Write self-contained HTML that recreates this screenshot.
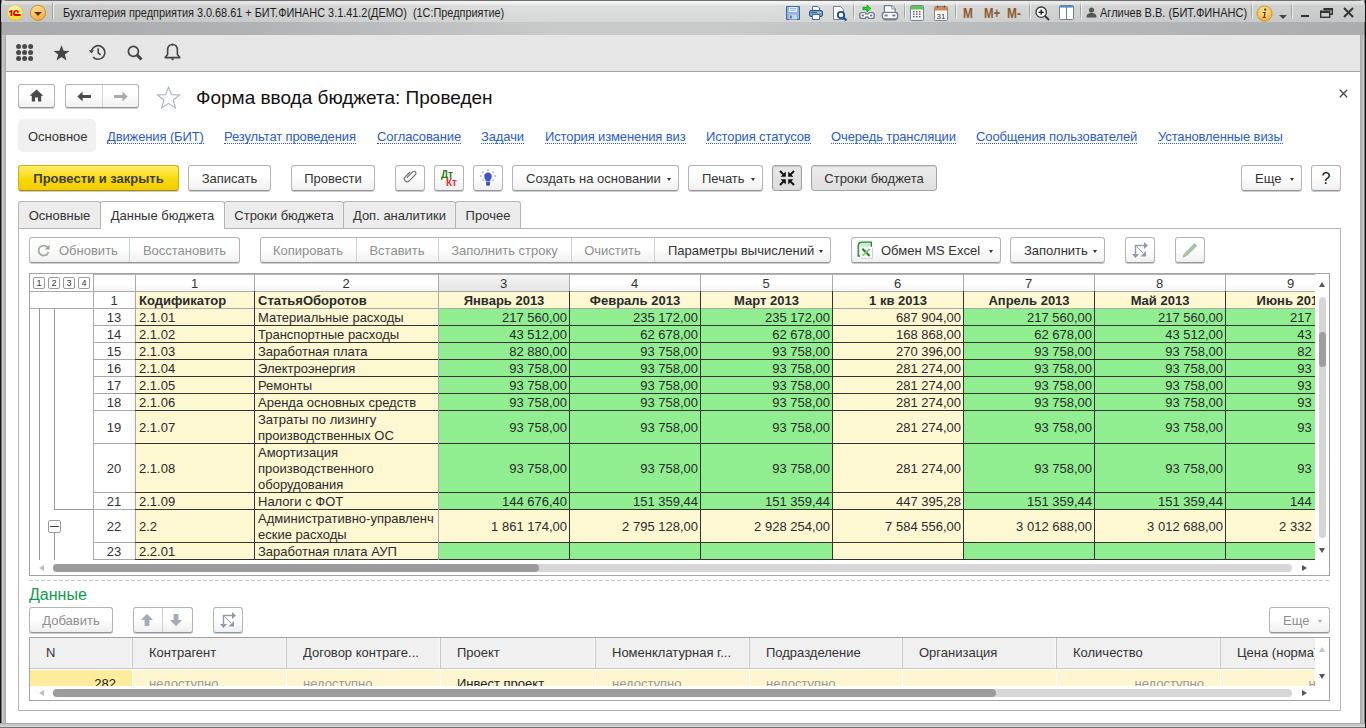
<!DOCTYPE html>
<html><head><meta charset="utf-8"><title>1C</title>
<style>
*{margin:0;padding:0;box-sizing:border-box}
html,body{width:1366px;height:728px;overflow:hidden;position:relative;background:#fff;font-family:"Liberation Sans",sans-serif;font-size:13px;color:#333}
.abs{position:absolute}
.t{position:absolute;white-space:nowrap}
.btn{position:absolute;height:26px;border:1px solid #b4b4b4;border-bottom-color:#979797;border-radius:3px;background:linear-gradient(#ffffff 0%,#ffffff 45%,#efefef 100%);box-shadow:0 1px 0 rgba(0,0,0,.2);color:#333;font-size:13px;line-height:24px;padding-top:1px;text-align:center;white-space:nowrap}
.dis{color:#8e8e8e}
.arr{position:absolute;width:0;height:0;border-left:2.5px solid transparent;border-right:2.5px solid transparent;border-top:3px solid #333}
.lnk{position:absolute;color:#2a5ac8;white-space:nowrap;font-size:13px;line-height:13px;height:14px;border-bottom:1px dotted #2a5ac8}
.tab{position:absolute;top:201px;height:27px;border:1px solid #b5b5b5;border-bottom:none;border-radius:3px 3px 0 0;background:#ececec;line-height:27px;text-align:center;font-size:13px;color:#333}
.cell{position:absolute;overflow:hidden;white-space:nowrap;line-height:16px;padding-top:1px}
</style></head><body>

<div class="abs" style="left:0;top:0;width:1366px;height:728px;background:linear-gradient(90deg,#111 0,#111 1px,#747474 1px,#747474 2px,#cbcbcb 2px,#cbcbcb 3px,#bdbdbd 3px,#bdbdbd 5px,#a9a9a9 5px,#a9a9a9 1361px,#b9b9b9 1361px,#b9b9b9 1363px,#cacaca 1363px,#cacaca 1364px,#777 1364px,#777 1365px,#111 1365px)"></div>
<div class="abs" style="left:0;top:723px;width:1365px;height:5px;background:linear-gradient(#a9a9a9 0,#a9a9a9 1px,#c5c6c6 1px,#cacbcb 3px,#d6d6d6 3px,#d6d6d6 4px,#747474 4px)"></div>
<div class="abs" style="left:1px;top:0;width:1364px;height:22px;border-radius:6px 6px 0 0;background:linear-gradient(#707070 0,#707070 1px,#f6f6f6 1px,#f0f0f0 4px,#dedfdf 5.5px,#d6d7d7 22px)"></div>
<div class="abs" style="left:1px;top:1px;width:1364px;height:21px;border-radius:6px 6px 0 0;background:linear-gradient(90deg,rgba(0,0,0,.09) 0,rgba(0,0,0,.06) 250px,rgba(0,0,0,0) 520px,rgba(0,0,0,0) 760px,rgba(0,0,0,.04) 1000px,rgba(0,0,0,.08) 1364px)"></div>
<div class="abs" style="left:2px;top:22px;width:1362px;height:13px;background:linear-gradient(90deg,#a8aaac 0,#b0b2b4 250px,#c9caca 560px,#c9caca 720px,#b8babb 1000px,#aaacae 1362px)"></div>
<div class="abs" style="left:6px;top:35px;width:1354px;height:36px;background:#e6e6e6"></div>
<div class="abs" style="left:6px;top:71px;width:1354px;height:1px;background:#a6a6a6"></div>
<div class="abs" style="left:6px;top:72px;width:1354px;height:651px;background:#fff"></div>
<svg class="abs" style="left:6px;top:4px" width="18" height="18" viewBox="0 0 18 18">
<defs><linearGradient id="yg" x1="0" y1="0" x2="0" y2="1"><stop offset="0" stop-color="#fff6b8"/><stop offset=".55" stop-color="#ffee60"/><stop offset="1" stop-color="#ffd800"/></linearGradient>
<linearGradient id="og" x1="0" y1="0" x2=".3" y2="1"><stop offset="0" stop-color="#ffe0a0"/><stop offset="1" stop-color="#ffae3c"/></linearGradient></defs>
<circle cx="9" cy="8.7" r="7.6" fill="url(#yg)" stroke="#dcc24c" stroke-width=".7"/>
<path d="M3 7.4 L5.4 6 L6.3 6 L6.3 11.9 L4.6 11.9 L4.6 8.2 L3.3 8.8Z" fill="#e40000"/>
<path d="M7.1 9.6 C7.1 7.3 8.5 6 10.1 6 C11.8 6 12.9 7.1 12.9 8.7 L11.2 8.7 C11.2 7.9 10.8 7.5 10.1 7.5 C9.3 7.5 8.8 8.3 8.8 9.6 C8.8 9.9 8.8 10 8.9 10.1 L14.6 10.1 L14.6 11.9 L9.3 11.9 C7.9 11.9 7.1 11 7.1 9.6Z" fill="#e40000"/>
</svg>
<svg class="abs" style="left:29px;top:4px" width="18" height="18" viewBox="0 0 18 18">
<circle cx="9" cy="8.8" r="7.6" fill="url(#og)" stroke="#bf942c" stroke-width="1"/>
<path d="M5.2 8 L12.8 8 L9 11.9Z" fill="#4a3a22"/>
</svg>
<div class="abs" style="left:52px;top:3px;width:1px;height:16px;background:#9d9d9d;box-shadow:1px 0 0 #f4f4f4"></div>
<div class="t" style="left:63px;top:6px;font-size:12px;line-height:15px;color:#1e1e1e;transform:scaleX(0.907);transform-origin:0 0">Бухгалтерия предприятия 3.0.68.61 + БИТ.ФИНАНС 3.1.41.2(ДЕМО)&nbsp; (1С:Предприятие)</div>
<svg class="abs" style="left:786px;top:6px" width="14" height="14" viewBox="0 0 14 14">
<path d="M0.5 0.5 H13.5 V13.5 H0.5Z" fill="#8cb4e4" stroke="#3a68a6"/>
<rect x="3" y="1" width="8" height="5" fill="#e8f0fa"/><rect x="4" y="2.2" width="6" height=".8" fill="#8aa8cc"/><rect x="4" y="3.8" width="6" height=".8" fill="#8aa8cc"/>
<rect x="3" y="8.5" width="8" height="5" fill="#c9d3dc"/><rect x="4" y="9.5" width="1.6" height="3" fill="#3a6aa8"/>
</svg>
<svg class="abs" style="left:809px;top:6px" width="14" height="14" viewBox="0 0 14 14">
<path d="M3.5 0.5 H9 L10.5 2 V5 H3.5Z" fill="#fff" stroke="#4a6f9c"/>
<rect x="0.5" y="4.5" width="13" height="6" rx="1.5" fill="#7aa2d0" stroke="#2f5586"/><rect x="2" y="6" width="10" height=".8" fill="#2f5586"/>
<rect x="10.5" y="6" width="1.5" height="1" fill="#fff"/><rect x="8.5" y="6" width="1.2" height="1" fill="#fff"/>
<rect x="3.5" y="8.5" width="7" height="5" fill="#fff" stroke="#4a6f9c"/>
</svg>
<svg class="abs" style="left:833px;top:6px" width="15" height="15" viewBox="0 0 15 15">
<path d="M0.5 0.5 H7.5 L10.5 3.5 V13.5 H0.5Z" fill="#fff" stroke="#6d7f95"/>
<circle cx="8" cy="9" r="3.2" fill="#fff" stroke="#1d4f86" stroke-width="1.8"/>
<path d="M10.2 11.2 L13.5 14.5" stroke="#1d4f86" stroke-width="2.2"/>
</svg>
<div class="abs" style="left:853px;top:3px;width:1px;height:16px;background:linear-gradient(rgba(160,160,160,.3),#a0a0a0 30%,#a0a0a0 70%,rgba(160,160,160,.3));box-shadow:1px 0 0 rgba(255,255,255,.6)"></div>
<svg class="abs" style="left:858px;top:4px" width="18" height="16" viewBox="0 0 18 16">
<path d="M5 3.3 H9 V1.1 L12.9 4.5 L9 7.9 V5.7 H5Z" fill="#24e024" stroke="#129012" stroke-width=".8" stroke-linejoin="round"/>
<rect x="1.8" y="8.6" width="6.4" height="5.8" rx="2" fill="#fff" stroke="#6e7c8c" stroke-width="1.4"/>
<rect x="9.8" y="8.6" width="6.4" height="5.8" rx="2" fill="#fff" stroke="#6e7c8c" stroke-width="1.4"/>
<rect x="3.6" y="10.6" width="2.6" height="1.8" fill="#6e7c8c"/><rect x="11.8" y="10.6" width="2.6" height="1.8" fill="#6e7c8c"/>
<rect x="6.2" y="10.8" width="5.6" height="1.4" fill="#fff"/>
</svg>
<svg class="abs" style="left:881px;top:4px" width="18" height="17" viewBox="0 0 18 17">
<path d="M3.4 8.5 V1.6 H10.8 L14.2 5 V8.5" fill="#fff" stroke="#6e7c8c" stroke-width="1.2"/>
<path d="M10.8 1.6 V5 H14.2" fill="#e8ecf0" stroke="#6e7c8c" stroke-width=".8"/>
<rect x="1.4" y="8.4" width="15.2" height="6.6" rx="2.2" fill="#f6f7f8" stroke="#6e7c8c" stroke-width="1.4"/>
<rect x="2.5" y="15" width="13" height="1.4" fill="#6e7c8c"/>
<rect x="3.6" y="10.6" width="3" height="1.8" fill="#6e7c8c"/><rect x="11.4" y="10.6" width="3" height="1.8" fill="#6e7c8c"/>
</svg>
<div class="abs" style="left:904px;top:3px;width:1px;height:16px;background:linear-gradient(rgba(160,160,160,.3),#a0a0a0 30%,#a0a0a0 70%,rgba(160,160,160,.3));box-shadow:1px 0 0 rgba(255,255,255,.6)"></div>
<svg class="abs" style="left:910px;top:5px" width="14" height="16" viewBox="0 0 14 16">
<rect x="0.5" y="0.5" width="13" height="15" rx="1" fill="#f2f4f6" stroke="#7a8592"/>
<rect x="1" y="1" width="12" height="3.5" fill="#5ac85a"/>
<g fill="#555"><rect x="3" y="6" width="1.5" height="1.3"/><rect x="6" y="6" width="1.5" height="1.3"/><rect x="3" y="8.5" width="1.5" height="1.3"/><rect x="6" y="8.5" width="1.5" height="1.3"/><rect x="3" y="11" width="1.5" height="1.3"/><rect x="6" y="11" width="1.5" height="1.3"/><rect x="9" y="8.5" width="1.5" height="1.3"/><rect x="9" y="11" width="1.5" height="1.3"/></g>
<rect x="9" y="6" width="1.5" height="1.3" fill="#e03030"/>
</svg>
<svg class="abs" style="left:934px;top:5px" width="14" height="16" viewBox="0 0 14 16">
<rect x="0.5" y="1.5" width="13" height="14" rx="1" fill="#f6f6f6" stroke="#7a8592"/>
<rect x="1" y="2" width="12" height="3.5" fill="#d48a50"/>
<rect x="3" y="0.5" width="1.2" height="2.5" fill="#8a5a30"/><rect x="9.8" y="0.5" width="1.2" height="2.5" fill="#8a5a30"/>
<text x="7" y="13.6" font-family="Liberation Sans" font-size="8" text-anchor="middle" fill="#333">31</text>
</svg>
<div class="abs" style="left:955px;top:3px;width:1px;height:16px;background:linear-gradient(rgba(160,160,160,.3),#a0a0a0 30%,#a0a0a0 70%,rgba(160,160,160,.3));box-shadow:1px 0 0 rgba(255,255,255,.6)"></div>
<div class="t" style="left:963px;top:5px;font-size:14px;line-height:16px;font-weight:bold;color:#8a5a2e;transform:scaleX(0.85);transform-origin:0 0">M</div>
<div class="t" style="left:984px;top:5px;font-size:14px;line-height:16px;font-weight:bold;color:#8a5a2e;transform:scaleX(0.82);transform-origin:0 0">M+</div>
<div class="t" style="left:1007px;top:5px;font-size:14px;line-height:16px;font-weight:bold;color:#8a5a2e;transform:scaleX(0.85);transform-origin:0 0">M-</div>
<div class="abs" style="left:1029px;top:3px;width:1px;height:16px;background:linear-gradient(rgba(160,160,160,.3),#a0a0a0 30%,#a0a0a0 70%,rgba(160,160,160,.3));box-shadow:1px 0 0 rgba(255,255,255,.6)"></div>
<svg class="abs" style="left:1035px;top:6px" width="15" height="15" viewBox="0 0 15 15">
<circle cx="6.2" cy="6.2" r="5.2" fill="#fff" stroke="#333" stroke-width="1.3"/>
<path d="M3.6 6.2 H8.8 M6.2 3.6 V8.8" stroke="#222" stroke-width="1.4"/>
<path d="M10 10 L14 14" stroke="#333" stroke-width="1.8"/>
</svg>
<svg class="abs" style="left:1059px;top:5px" width="15" height="15" viewBox="0 0 15 15">
<rect x="0.5" y="0.5" width="14" height="14" rx="1" fill="#fff" stroke="#6f7f90"/>
<rect x="1" y="1" width="13" height="1.6" fill="#4a90d9"/>
<rect x="7" y="2" width="1" height="12" fill="#6f7f90"/>
</svg>
<div class="abs" style="left:1080px;top:3px;width:1px;height:16px;background:linear-gradient(rgba(160,160,160,.3),#a0a0a0 30%,#a0a0a0 70%,rgba(160,160,160,.3));box-shadow:1px 0 0 rgba(255,255,255,.6)"></div>
<svg class="abs" style="left:1086px;top:7px" width="11" height="11" viewBox="0 0 11 11">
<circle cx="5.5" cy="3" r="2.6" fill="#555"/><path d="M0.5 10.5 C0.5 6.8 2.5 6 5.5 6 C8.5 6 10.5 6.8 10.5 10.5Z" fill="#555"/>
</svg>
<div class="t" style="left:1100px;top:6px;font-size:12px;line-height:15px;color:#1e1e1e;transform:scaleX(0.92);transform-origin:0 0">Агличев В.В. (БИТ.ФИНАНС)</div>
<div class="abs" style="left:1251px;top:3px;width:1px;height:16px;background:linear-gradient(rgba(160,160,160,.3),#a0a0a0 30%,#a0a0a0 70%,rgba(160,160,160,.3));box-shadow:1px 0 0 rgba(255,255,255,.6)"></div>
<svg class="abs" style="left:1256px;top:5px" width="17" height="17" viewBox="0 0 17 17">
<defs><radialGradient id="ig" cx="50%" cy="35%" r="65%"><stop offset="0" stop-color="#ffe6a6"/><stop offset="1" stop-color="#f4b034"/></radialGradient></defs>
<circle cx="8.5" cy="8.5" r="7.6" fill="url(#ig)" stroke="#c9922e" stroke-width=".9"/>
<circle cx="9.2" cy="4.6" r="1.2" fill="#5a3c10"/>
<path d="M6.8 7 H9.8 L8.8 12 H10 L9.8 13 H6.4 L6.6 12 H7.6 L8.3 8 H6.6Z" fill="#5a3c10"/>
</svg>
<div class="arr" style="left:1279px;top:15px;border-left-width:4px;border-right-width:4px;border-top:4px solid #444"></div>
<div class="abs" style="left:1291px;top:3px;width:1px;height:16px;background:linear-gradient(rgba(160,160,160,.3),#a0a0a0 30%,#a0a0a0 70%,rgba(160,160,160,.3));box-shadow:1px 0 0 rgba(255,255,255,.6)"></div>
<div class="abs" style="left:1301px;top:15px;width:8px;height:2px;background:#333"></div>
<svg class="abs" style="left:1320px;top:8px" width="13" height="10" viewBox="0 0 13 10">
<path d="M3.5 0.7 H12.3 V6.3 H10" fill="none" stroke="#333" stroke-width="1.4"/>
<rect x="0.7" y="3.2" width="9" height="6.1" fill="none" stroke="#333" stroke-width="1.4"/>
<rect x="0.7" y="3.2" width="9" height="1.8" fill="#333"/><rect x="3.5" y="0.7" width="8.8" height="1.6" fill="#333"/>
</svg>
<svg class="abs" style="left:1343px;top:7px" width="11" height="11" viewBox="0 0 11 11">
<path d="M1 1 L10 10 M10 1 L1 10" stroke="#333" stroke-width="2"/>
</svg>
<svg class="abs" style="left:16px;top:44px" width="18" height="18" viewBox="0 0 18 18"><circle cx="2.6" cy="2.6" r="2.5" fill="#4a4a4a"/><circle cx="2.6" cy="8.6" r="2.5" fill="#4a4a4a"/><circle cx="2.6" cy="14.6" r="2.5" fill="#4a4a4a"/><circle cx="8.6" cy="2.6" r="2.5" fill="#4a4a4a"/><circle cx="8.6" cy="8.6" r="2.5" fill="#4a4a4a"/><circle cx="8.6" cy="14.6" r="2.5" fill="#4a4a4a"/><circle cx="14.6" cy="2.6" r="2.5" fill="#4a4a4a"/><circle cx="14.6" cy="8.6" r="2.5" fill="#4a4a4a"/><circle cx="14.6" cy="14.6" r="2.5" fill="#4a4a4a"/></svg>
<svg class="abs" style="left:53px;top:45px" width="17" height="16" viewBox="0 0 17 16">
<path d="M8.5 0.3 L10.6 5.8 L16.5 6 L11.8 9.6 L13.5 15.5 L8.5 12 L3.5 15.5 L5.2 9.6 L0.5 6 L6.4 5.8Z" fill="#444"/>
</svg>
<svg class="abs" style="left:88px;top:44px" width="19" height="17" viewBox="0 0 19 17">
<path d="M3.6 6.5 A6.8 6.8 0 1 1 5 13" fill="none" stroke="#444" stroke-width="1.6"/>
<path d="M0.8 6.2 L6 6.2 L3.4 9.6Z" fill="#444"/>
<path d="M10.2 4.2 V8.8 L12.6 10.8" fill="none" stroke="#444" stroke-width="1.5"/>
</svg>
<svg class="abs" style="left:127px;top:45px" width="17" height="16" viewBox="0 0 17 16">
<circle cx="6.4" cy="6.4" r="5" fill="none" stroke="#444" stroke-width="1.7"/>
<path d="M10 10 L14.5 14.5" stroke="#444" stroke-width="3"/>
</svg>
<svg class="abs" style="left:164px;top:43px" width="17" height="19" viewBox="0 0 17 19">
<path d="M8.5 1.5 C5 1.5 3.6 4.2 3.6 7.5 V11.5 L1.2 14.6 H15.8 L13.4 11.5 V7.5 C13.4 4.2 12 1.5 8.5 1.5Z" fill="none" stroke="#444" stroke-width="1.6" stroke-linejoin="round"/>
<circle cx="8.5" cy="1.6" r="1.2" fill="#444"/>
<path d="M6.4 15.5 L8.5 17.6 L10.6 15.5Z" fill="#444"/>
</svg>
<div class="btn" style="left:18px;top:84px;width:37px;height:24px"></div>
<svg class="abs" style="left:29px;top:89px" width="15" height="13" viewBox="0 0 15 13">
<path d="M7.5 0.6 L14.4 6.8 H12.2 V12.4 H9 V8.6 H6 V12.4 H2.8 V6.8 H0.6Z" fill="#4a4a4a"/></svg>
<div class="btn" style="left:65px;top:84px;width:74px;height:24px"></div>
<div class="abs" style="left:102px;top:85px;width:1px;height:22px;background:#d4d4d4"></div>
<svg class="abs" style="left:77px;top:91px" width="15" height="11" viewBox="0 0 15 11">
<path d="M0.4 5.5 L5.6 0.6 V3.9 H14 V7.1 H5.6 V10.4Z" fill="#4a4a4a"/></svg>
<svg class="abs" style="left:113px;top:91px" width="15" height="11" viewBox="0 0 15 11">
<path d="M14.6 5.5 L9.4 0.6 V3.9 H1 V7.1 H9.4 V10.4Z" fill="#a9a9a9"/></svg>
<svg class="abs" style="left:156px;top:86px" width="25" height="23" viewBox="0 0 25 23">
<path d="M12.5 1 L15.4 8.6 L23.6 8.9 L17.2 14 L19.4 22 L12.5 17.4 L5.6 22 L7.8 14 L1.4 8.9 L9.6 8.6Z" fill="none" stroke="#aab4c0" stroke-width="1.1" stroke-linejoin="miter"/></svg>
<div class="t" style="left:196px;top:87px;font-size:19px;line-height:22px;color:#111">Форма ввода бюджета: Проведен</div>
<svg class="abs" style="left:1339px;top:89px" width="9" height="9" viewBox="0 0 9 9">
<path d="M0.8 0.8 L8.2 8.2 M8.2 0.8 L0.8 8.2" stroke="#444" stroke-width="1.3"/></svg>
<div class="abs" style="left:18px;top:119px;width:78px;height:33px;border-radius:5px;background:#f0f0f0"></div>
<div class="t" style="left:28px;top:129px;line-height:16px;color:#333">Основное</div>
<div class="lnk" style="left:107px;top:130px;letter-spacing:-0.12px">Движения (БИТ)</div>
<div class="lnk" style="left:224px;top:130px;letter-spacing:-0.12px">Результат проведения</div>
<div class="lnk" style="left:377px;top:130px;letter-spacing:-0.12px">Согласование</div>
<div class="lnk" style="left:481px;top:130px;letter-spacing:-0.12px">Задачи</div>
<div class="lnk" style="left:545px;top:130px;letter-spacing:-0.12px">История изменения виз</div>
<div class="lnk" style="left:706px;top:130px;letter-spacing:-0.12px">История статусов</div>
<div class="lnk" style="left:831px;top:130px;letter-spacing:-0.12px">Очередь трансляции</div>
<div class="lnk" style="left:976px;top:130px;letter-spacing:-0.12px">Сообщения пользователей</div>
<div class="lnk" style="left:1158px;top:130px;letter-spacing:-0.12px">Установленные визы</div>
<div class="btn" style="left:18px;top:165px;width:161px;background:linear-gradient(#ffec6a,#f7d800 60%,#f0cc00);border-color:#cfae16;border-bottom-color:#a88a00;font-weight:bold;color:#3d3d3d">Провести и закрыть</div>
<div class="btn" style="left:188px;top:165px;width:83px">Записать</div>
<div class="btn" style="left:291px;top:165px;width:84px">Провести</div>
<div class="btn" style="left:395px;top:165px;width:30px"></div>
<svg class="abs" style="left:401px;top:167px" width="18" height="18" viewBox="0 0 18 18">
<g transform="rotate(45 9 9)"><path d="M6.2 6.5 V13 A2.8 2.8 0 0 0 11.8 13 V4.2 A1.9 1.9 0 0 0 8 4.2 V12" fill="none" stroke="#707070" stroke-width="1.2" stroke-linecap="round"/></g></svg>
<div class="btn" style="left:434px;top:165px;width:30px"></div>
<div class="t" style="left:441px;top:170px;font-size:10px;line-height:10px;font-weight:bold;color:#1c7812">Дт</div>
<div class="t" style="left:446px;top:178px;font-size:10px;line-height:10px;font-weight:bold;color:#f02a2a">Кт</div>
<div class="btn" style="left:473px;top:165px;width:30px"></div>
<svg class="abs" style="left:478px;top:169px" width="20" height="18" viewBox="0 0 20 18">
<g stroke="#8a96d8" stroke-width="1.3"><path d="M10 0.3 V2"/><path d="M4.4 2.6 L5.6 3.8"/><path d="M15.6 2.6 L14.4 3.8"/><path d="M1.8 7 H3.6"/><path d="M16.4 7 H18.2"/><path d="M4.6 11.6 L5.6 10.6"/><path d="M15.4 11.6 L14.4 10.6"/></g>
<path d="M10 3.4 C7.6 3.4 6.2 5.2 6.2 7.2 C6.2 9 7.6 10.2 7.8 12 H12.2 C12.4 10.2 13.8 9 13.8 7.2 C13.8 5.2 12.4 3.4 10 3.4Z" fill="#4454c4"/>
<path d="M8 12.4 H12 V15.6 C12 16.6 11.2 17 10 17 C8.8 17 8 16.6 8 15.6Z" fill="#4a58b8"/>
</svg>
<div class="btn" style="left:512px;top:165px;width:167px;text-align:left;padding-left:13px">Создать на основании</div>
<div class="arr" style="left:667px;top:178px"></div>
<div class="btn" style="left:688px;top:165px;width:75px;text-align:left;padding-left:13px">Печать</div>
<div class="arr" style="left:751px;top:178px"></div>
<div class="btn" style="left:772px;top:165px;width:30px;background:linear-gradient(#e6e6e6,#dcdcdc);box-shadow:inset 0 1px 1px rgba(0,0,0,.12);border-color:#9e9e9e"></div>
<svg class="abs" style="left:779px;top:170px" width="16" height="16" viewBox="0 0 16 16"><path d="M1.0 1.0 L4.6 4.6" stroke="#111" stroke-width="2"/><path d="M6.8 6.8 L1.6 6.8 L6.8 1.6Z" fill="#111"/><path d="M15.0 1.0 L11.4 4.6" stroke="#111" stroke-width="2"/><path d="M9.2 6.8 L14.4 6.8 L9.2 1.6Z" fill="#111"/><path d="M1.0 15.0 L4.6 11.4" stroke="#111" stroke-width="2"/><path d="M6.8 9.2 L1.6 9.2 L6.8 14.4Z" fill="#111"/><path d="M15.0 15.0 L11.4 11.4" stroke="#111" stroke-width="2"/><path d="M9.2 9.2 L14.4 9.2 L9.2 14.4Z" fill="#111"/></svg>
<div class="btn" style="left:811px;top:165px;width:126px;background:linear-gradient(#ececec,#e0e0e0);box-shadow:inset 0 1px 1px rgba(0,0,0,.1);border-color:#a4a4a4">Строки бюджета</div>
<div class="btn" style="left:1241px;top:165px;width:61px;text-align:left;padding-left:13px">Еще</div>
<div class="arr" style="left:1290px;top:178px"></div>
<div class="btn" style="left:1311px;top:165px;width:30px;font-size:16px;color:#111">?</div>
<div class="abs" style="left:18px;top:228px;width:1323px;height:483px;border:1px solid #b5b5b5;background:#fff"></div>
<div class="tab" style="left:18px;width:83px">Основные</div>
<div class="tab" style="left:224px;width:120px">Строки бюджета</div>
<div class="tab" style="left:343px;width:113px">Доп. аналитики</div>
<div class="tab" style="left:455px;width:66px">Прочее</div>
<div class="tab" style="left:100px;width:125px;background:#fff;height:28px;top:201px;line-height:28px;z-index:2">Данные бюджета</div>
<div class="btn" style="left:29px;top:237px;width:211px"></div>
<div class="t dis" style="left:29px;top:243px;width:100px;text-align:center;line-height:16px"></div>
<div class="abs" style="left:129px;top:238px;width:1px;height:24px;background:#d0d0d0"></div>
<div class="t dis" style="left:129px;top:243px;width:111px;text-align:center;line-height:16px">Восстановить</div>
<div class="t dis" style="left:59px;top:243px;line-height:16px">Обновить</div>
<svg class="abs" style="left:37px;top:244px" width="13" height="13" viewBox="0 0 13 13">
<path d="M11 4.2 A5 5 0 1 0 11.4 8" fill="none" stroke="#98ae98" stroke-width="1.8"/>
<path d="M12.6 0.6 V5.6 H7.6Z" fill="#98ae98"/></svg>
<div class="btn" style="left:260px;top:237px;width:571px"></div>
<div class="t dis" style="left:260px;top:243px;width:96px;text-align:center;line-height:16px">Копировать</div>
<div class="abs" style="left:356px;top:238px;width:1px;height:24px;background:#d0d0d0"></div>
<div class="t dis" style="left:356px;top:243px;width:82px;text-align:center;line-height:16px">Вставить</div>
<div class="abs" style="left:438px;top:238px;width:1px;height:24px;background:#d0d0d0"></div>
<div class="t dis" style="left:438px;top:243px;width:133px;text-align:center;line-height:16px">Заполнить строку</div>
<div class="abs" style="left:571px;top:238px;width:1px;height:24px;background:#d0d0d0"></div>
<div class="t dis" style="left:571px;top:243px;width:83px;text-align:center;line-height:16px">Очистить</div>
<div class="abs" style="left:654px;top:238px;width:1px;height:24px;background:#d0d0d0"></div>
<div class="t dis" style="left:654px;top:243px;width:177px;text-align:center;line-height:16px"></div>
<div class="t" style="left:668px;top:243px;line-height:16px;color:#333">Параметры вычислений</div>
<div class="arr" style="left:819px;top:250px"></div>
<div class="btn" style="left:851px;top:237px;width:150px;text-align:left;padding-left:29px">Обмен MS Excel</div>
<svg class="abs" style="left:857px;top:241px" width="17" height="18" viewBox="0 0 17 18">
<path d="M1.2 15 V5 C1.2 2.6 2.6 1.2 5 1.2 H14.4 V15Z" fill="#cfe8cf" stroke="#1f8a2c" stroke-width="1.3"/>
<rect x="3.6" y="6.4" width="12" height="11" fill="#b9b9b9"/>
<rect x="3" y="5.8" width="12" height="11" fill="#fdfdfd"/>
<path d="M5.4 7.8 L12.6 15" stroke="#2b7d2b" stroke-width="2.1"/>
<path d="M12.6 8 L5.6 14.6" stroke="#7ccb7c" stroke-width="1.8"/></svg>
<div class="arr" style="left:989px;top:250px"></div>
<div class="btn" style="left:1010px;top:237px;width:95px;text-align:left;padding-left:13px">Заполнить</div>
<div class="arr" style="left:1093px;top:250px"></div>
<div class="btn" style="left:1125px;top:237px;width:30px"></div>
<svg class="abs" style="left:1130px;top:241px" width="19" height="18" viewBox="0 0 19 18"><path d="M5.5 4.5 V13.5" stroke="#8e9aa8" stroke-width="1.4"/><path d="M2 13 H9 L5.5 17Z" fill="#8e9aa8"/>
<path d="M4.8 4.5 H14.5" stroke="#8e9aa8" stroke-width="1.4"/><path d="M14 1 V8 L18 4.5Z" fill="#8e9aa8"/>
<path d="M6.5 5.5 L13 12" stroke="#8e9aa8" stroke-width="1"/><path d="M10.5 15.5 H16 V10Z" fill="#8e9aa8"/></svg>
<div class="btn" style="left:1175px;top:237px;width:30px"></div>
<svg class="abs" style="left:1181px;top:243px" width="17" height="16" viewBox="0 0 17 16">
<path d="M12.3 1.2 L15 3.9 L6.2 12.7 L3.5 10Z" fill="#a5c2a5"/>
<path d="M12.3 1.2 L13.3 0.3 L15.9 2.9 L15 3.9Z" fill="#8c9cac"/>
<path d="M3.5 10 L6.2 12.7 L2.6 14.6 L1.8 14.2 L1.6 13.4Z" fill="#c2b09a"/></svg>
<div class="abs" style="left:29px;top:273px;width:1301px;height:303px;border:1px solid #a3a3a3;background:#fff"></div>
<div class="abs" style="left:30px;top:274px;width:1285px;height:286px;overflow:hidden">
<div class="abs" style="left:0px;top:0px;width:1300px;height:17px;background:#fff"></div>
<div class="abs" style="left:105px;top:0px;width:119px;height:17px;background:linear-gradient(#fff 60%,#f3f3f3)"></div>
<div class="cell" style="left:105px;top:1px;width:119px;height:16px;text-align:center;color:#333">1</div>
<div class="abs" style="left:224px;top:0px;width:184px;height:17px;background:linear-gradient(#fff 60%,#f3f3f3)"></div>
<div class="cell" style="left:224px;top:1px;width:184px;height:16px;text-align:center;color:#333">2</div>
<div class="abs" style="left:408px;top:0px;width:131px;height:17px;background:linear-gradient(#f6f6f6,#e4e4e4)"></div>
<div class="cell" style="left:408px;top:1px;width:131px;height:16px;text-align:center;color:#333">3</div>
<div class="abs" style="left:539px;top:0px;width:131px;height:17px;background:linear-gradient(#fff 60%,#f3f3f3)"></div>
<div class="cell" style="left:539px;top:1px;width:131px;height:16px;text-align:center;color:#333">4</div>
<div class="abs" style="left:670px;top:0px;width:132px;height:17px;background:linear-gradient(#fff 60%,#f3f3f3)"></div>
<div class="cell" style="left:670px;top:1px;width:132px;height:16px;text-align:center;color:#333">5</div>
<div class="abs" style="left:802px;top:0px;width:131px;height:17px;background:linear-gradient(#fff 60%,#f3f3f3)"></div>
<div class="cell" style="left:802px;top:1px;width:131px;height:16px;text-align:center;color:#333">6</div>
<div class="abs" style="left:933px;top:0px;width:131px;height:17px;background:linear-gradient(#fff 60%,#f3f3f3)"></div>
<div class="cell" style="left:933px;top:1px;width:131px;height:16px;text-align:center;color:#333">7</div>
<div class="abs" style="left:1064px;top:0px;width:131px;height:17px;background:linear-gradient(#fff 60%,#f3f3f3)"></div>
<div class="cell" style="left:1064px;top:1px;width:131px;height:16px;text-align:center;color:#333">8</div>
<div class="abs" style="left:1195px;top:0px;width:131px;height:17px;background:linear-gradient(#fff 60%,#f3f3f3)"></div>
<div class="cell" style="left:1195px;top:1px;width:131px;height:16px;text-align:center;color:#333">9</div>
<div class="abs" style="left:63px;top:0px;width:42px;height:17px;background:linear-gradient(#fff 60%,#f3f3f3)"></div>
<div class="abs" style="left:3px;top:3px;width:12px;height:12px;border:1px solid #9a9a9a;border-radius:2px;background:#fff"></div>
<div class="cell" style="left:3px;top:4px;width:12px;height:11px;font-size:9px;line-height:11px;padding-top:0;text-align:center;color:#333">1</div>
<div class="abs" style="left:18px;top:3px;width:12px;height:12px;border:1px solid #9a9a9a;border-radius:2px;background:#fff"></div>
<div class="cell" style="left:18px;top:4px;width:12px;height:11px;font-size:9px;line-height:11px;padding-top:0;text-align:center;color:#333">2</div>
<div class="abs" style="left:33px;top:3px;width:12px;height:12px;border:1px solid #9a9a9a;border-radius:2px;background:#fff"></div>
<div class="cell" style="left:33px;top:4px;width:12px;height:11px;font-size:9px;line-height:11px;padding-top:0;text-align:center;color:#333">3</div>
<div class="abs" style="left:48px;top:3px;width:12px;height:12px;border:1px solid #9a9a9a;border-radius:2px;background:#fff"></div>
<div class="cell" style="left:48px;top:4px;width:12px;height:11px;font-size:9px;line-height:11px;padding-top:0;text-align:center;color:#333">4</div>
<div class="abs" style="left:63px;top:17px;width:42px;height:17px;background:linear-gradient(90deg,#fff 80%,#f7f7f7)"></div>
<div class="cell" style="left:63px;top:18px;width:42px;height:16px;text-align:center;line-height:16px;color:#333">1</div>
<div class="abs" style="left:63px;top:34px;width:42px;height:17px;background:linear-gradient(90deg,#fff 80%,#f7f7f7)"></div>
<div class="cell" style="left:63px;top:35px;width:42px;height:16px;text-align:center;line-height:16px;color:#333">13</div>
<div class="abs" style="left:63px;top:51px;width:42px;height:17px;background:linear-gradient(90deg,#fff 80%,#f7f7f7)"></div>
<div class="cell" style="left:63px;top:52px;width:42px;height:16px;text-align:center;line-height:16px;color:#333">14</div>
<div class="abs" style="left:63px;top:68px;width:42px;height:17px;background:linear-gradient(90deg,#fff 80%,#f7f7f7)"></div>
<div class="cell" style="left:63px;top:69px;width:42px;height:16px;text-align:center;line-height:16px;color:#333">15</div>
<div class="abs" style="left:63px;top:85px;width:42px;height:17px;background:linear-gradient(90deg,#fff 80%,#f7f7f7)"></div>
<div class="cell" style="left:63px;top:86px;width:42px;height:16px;text-align:center;line-height:16px;color:#333">16</div>
<div class="abs" style="left:63px;top:102px;width:42px;height:17px;background:linear-gradient(90deg,#fff 80%,#f7f7f7)"></div>
<div class="cell" style="left:63px;top:103px;width:42px;height:16px;text-align:center;line-height:16px;color:#333">17</div>
<div class="abs" style="left:63px;top:119px;width:42px;height:17px;background:linear-gradient(90deg,#fff 80%,#f7f7f7)"></div>
<div class="cell" style="left:63px;top:120px;width:42px;height:16px;text-align:center;line-height:16px;color:#333">18</div>
<div class="abs" style="left:63px;top:136px;width:42px;height:33px;background:linear-gradient(90deg,#fff 80%,#f7f7f7)"></div>
<div class="cell" style="left:63px;top:137px;width:42px;height:32px;text-align:center;line-height:32px;color:#333">19</div>
<div class="abs" style="left:63px;top:169px;width:42px;height:49px;background:linear-gradient(90deg,#fff 80%,#f7f7f7)"></div>
<div class="cell" style="left:63px;top:170px;width:42px;height:48px;text-align:center;line-height:48px;color:#333">20</div>
<div class="abs" style="left:63px;top:218px;width:42px;height:17px;background:linear-gradient(90deg,#fff 80%,#f7f7f7)"></div>
<div class="cell" style="left:63px;top:219px;width:42px;height:16px;text-align:center;line-height:16px;color:#333">21</div>
<div class="abs" style="left:63px;top:235px;width:42px;height:33px;background:linear-gradient(90deg,#fff 80%,#f7f7f7)"></div>
<div class="cell" style="left:63px;top:236px;width:42px;height:32px;text-align:center;line-height:32px;color:#333">22</div>
<div class="abs" style="left:63px;top:268px;width:42px;height:17px;background:linear-gradient(90deg,#fff 80%,#f7f7f7)"></div>
<div class="cell" style="left:63px;top:269px;width:42px;height:16px;text-align:center;line-height:16px;color:#333">23</div>
<div class="abs" style="left:63px;top:285px;width:42px;height:17px;background:linear-gradient(90deg,#fff 80%,#f7f7f7)"></div>
<div class="cell" style="left:63px;top:286px;width:42px;height:16px;text-align:center;line-height:16px;color:#333">24</div>
<div class="abs" style="left:105px;top:17px;width:119px;height:17px;background:#fdf7d2"></div>
<div class="abs" style="left:224px;top:17px;width:184px;height:17px;background:#fdf7d2"></div>
<div class="abs" style="left:408px;top:17px;width:131px;height:17px;background:#fdf7d2"></div>
<div class="abs" style="left:539px;top:17px;width:131px;height:17px;background:#fdf7d2"></div>
<div class="abs" style="left:670px;top:17px;width:132px;height:17px;background:#fdf7d2"></div>
<div class="abs" style="left:802px;top:17px;width:131px;height:17px;background:#fdf7d2"></div>
<div class="abs" style="left:933px;top:17px;width:131px;height:17px;background:#fdf7d2"></div>
<div class="abs" style="left:1064px;top:17px;width:131px;height:17px;background:#fdf7d2"></div>
<div class="abs" style="left:1195px;top:17px;width:131px;height:17px;background:#fdf7d2"></div>
<div class="cell" style="left:106px;top:18px;width:117px;height:16px;font-weight:bold;padding-left:3px;color:#2a2a2a">Кодификатор</div>
<div class="cell" style="left:225px;top:18px;width:183px;height:16px;font-weight:bold;padding-left:3px;color:#2a2a2a">СтатьяОборотов</div>
<div class="cell" style="left:409px;top:18px;width:130px;height:16px;font-weight:bold;text-align:center;color:#2a2a2a">Январь 2013</div>
<div class="cell" style="left:540px;top:18px;width:130px;height:16px;font-weight:bold;text-align:center;color:#2a2a2a">Февраль 2013</div>
<div class="cell" style="left:671px;top:18px;width:131px;height:16px;font-weight:bold;text-align:center;color:#2a2a2a">Март 2013</div>
<div class="cell" style="left:803px;top:18px;width:130px;height:16px;font-weight:bold;text-align:center;color:#2a2a2a">1 кв 2013</div>
<div class="cell" style="left:934px;top:18px;width:130px;height:16px;font-weight:bold;text-align:center;color:#2a2a2a">Апрель 2013</div>
<div class="cell" style="left:1065px;top:18px;width:130px;height:16px;font-weight:bold;text-align:center;color:#2a2a2a">Май 2013</div>
<div class="cell" style="left:1196px;top:18px;width:130px;height:16px;font-weight:bold;text-align:center;color:#2a2a2a">Июнь 2013</div>
<div class="abs" style="left:105px;top:34px;width:119px;height:17px;background:#fdf7d2"></div>
<div class="abs" style="left:224px;top:34px;width:184px;height:17px;background:#fdf7d2"></div>
<div class="abs" style="left:408px;top:34px;width:131px;height:17px;background:#90ee90"></div>
<div class="cell" style="left:409px;top:35px;width:130px;height:16px;text-align:right;padding-right:2px;line-height:16px;color:#2a2a2a">217 560,00</div>
<div class="abs" style="left:539px;top:34px;width:131px;height:17px;background:#90ee90"></div>
<div class="cell" style="left:540px;top:35px;width:130px;height:16px;text-align:right;padding-right:2px;line-height:16px;color:#2a2a2a">235 172,00</div>
<div class="abs" style="left:670px;top:34px;width:132px;height:17px;background:#90ee90"></div>
<div class="cell" style="left:671px;top:35px;width:131px;height:16px;text-align:right;padding-right:2px;line-height:16px;color:#2a2a2a">235 172,00</div>
<div class="abs" style="left:802px;top:34px;width:131px;height:17px;background:#fdf7d2"></div>
<div class="cell" style="left:803px;top:35px;width:130px;height:16px;text-align:right;padding-right:2px;line-height:16px;color:#2a2a2a">687 904,00</div>
<div class="abs" style="left:933px;top:34px;width:131px;height:17px;background:#90ee90"></div>
<div class="cell" style="left:934px;top:35px;width:130px;height:16px;text-align:right;padding-right:2px;line-height:16px;color:#2a2a2a">217 560,00</div>
<div class="abs" style="left:1064px;top:34px;width:131px;height:17px;background:#90ee90"></div>
<div class="cell" style="left:1065px;top:35px;width:130px;height:16px;text-align:right;padding-right:2px;line-height:16px;color:#2a2a2a">217 560,00</div>
<div class="abs" style="left:1195px;top:34px;width:131px;height:17px;background:#90ee90"></div>
<div class="cell" style="left:1196px;top:35px;width:130px;height:16px;text-align:right;padding-right:1px;line-height:16px;color:#2a2a2a">217<span style="visibility:hidden"> 560,00</span></div>
<div class="cell" style="left:106px;top:35px;width:118px;height:16px;padding-left:3px;line-height:16px;color:#2a2a2a">2.1.01</div>
<div class="cell" style="left:225px;top:35px;width:183px;height:16px;padding-left:3px;line-height:16px;color:#2a2a2a">Материальные расходы</div>
<div class="abs" style="left:105px;top:51px;width:119px;height:17px;background:#fdf7d2"></div>
<div class="abs" style="left:224px;top:51px;width:184px;height:17px;background:#fdf7d2"></div>
<div class="abs" style="left:408px;top:51px;width:131px;height:17px;background:#90ee90"></div>
<div class="cell" style="left:409px;top:52px;width:130px;height:16px;text-align:right;padding-right:2px;line-height:16px;color:#2a2a2a">43 512,00</div>
<div class="abs" style="left:539px;top:51px;width:131px;height:17px;background:#90ee90"></div>
<div class="cell" style="left:540px;top:52px;width:130px;height:16px;text-align:right;padding-right:2px;line-height:16px;color:#2a2a2a">62 678,00</div>
<div class="abs" style="left:670px;top:51px;width:132px;height:17px;background:#90ee90"></div>
<div class="cell" style="left:671px;top:52px;width:131px;height:16px;text-align:right;padding-right:2px;line-height:16px;color:#2a2a2a">62 678,00</div>
<div class="abs" style="left:802px;top:51px;width:131px;height:17px;background:#fdf7d2"></div>
<div class="cell" style="left:803px;top:52px;width:130px;height:16px;text-align:right;padding-right:2px;line-height:16px;color:#2a2a2a">168 868,00</div>
<div class="abs" style="left:933px;top:51px;width:131px;height:17px;background:#90ee90"></div>
<div class="cell" style="left:934px;top:52px;width:130px;height:16px;text-align:right;padding-right:2px;line-height:16px;color:#2a2a2a">62 678,00</div>
<div class="abs" style="left:1064px;top:51px;width:131px;height:17px;background:#90ee90"></div>
<div class="cell" style="left:1065px;top:52px;width:130px;height:16px;text-align:right;padding-right:2px;line-height:16px;color:#2a2a2a">43 512,00</div>
<div class="abs" style="left:1195px;top:51px;width:131px;height:17px;background:#90ee90"></div>
<div class="cell" style="left:1196px;top:52px;width:130px;height:16px;text-align:right;padding-right:1px;line-height:16px;color:#2a2a2a">43<span style="visibility:hidden"> 512,00</span></div>
<div class="cell" style="left:106px;top:52px;width:118px;height:16px;padding-left:3px;line-height:16px;color:#2a2a2a">2.1.02</div>
<div class="cell" style="left:225px;top:52px;width:183px;height:16px;padding-left:3px;line-height:16px;color:#2a2a2a">Транспортные расходы</div>
<div class="abs" style="left:105px;top:68px;width:119px;height:17px;background:#fdf7d2"></div>
<div class="abs" style="left:224px;top:68px;width:184px;height:17px;background:#fdf7d2"></div>
<div class="abs" style="left:408px;top:68px;width:131px;height:17px;background:#90ee90"></div>
<div class="cell" style="left:409px;top:69px;width:130px;height:16px;text-align:right;padding-right:2px;line-height:16px;color:#2a2a2a">82 880,00</div>
<div class="abs" style="left:539px;top:68px;width:131px;height:17px;background:#90ee90"></div>
<div class="cell" style="left:540px;top:69px;width:130px;height:16px;text-align:right;padding-right:2px;line-height:16px;color:#2a2a2a">93 758,00</div>
<div class="abs" style="left:670px;top:68px;width:132px;height:17px;background:#90ee90"></div>
<div class="cell" style="left:671px;top:69px;width:131px;height:16px;text-align:right;padding-right:2px;line-height:16px;color:#2a2a2a">93 758,00</div>
<div class="abs" style="left:802px;top:68px;width:131px;height:17px;background:#fdf7d2"></div>
<div class="cell" style="left:803px;top:69px;width:130px;height:16px;text-align:right;padding-right:2px;line-height:16px;color:#2a2a2a">270 396,00</div>
<div class="abs" style="left:933px;top:68px;width:131px;height:17px;background:#90ee90"></div>
<div class="cell" style="left:934px;top:69px;width:130px;height:16px;text-align:right;padding-right:2px;line-height:16px;color:#2a2a2a">93 758,00</div>
<div class="abs" style="left:1064px;top:68px;width:131px;height:17px;background:#90ee90"></div>
<div class="cell" style="left:1065px;top:69px;width:130px;height:16px;text-align:right;padding-right:2px;line-height:16px;color:#2a2a2a">93 758,00</div>
<div class="abs" style="left:1195px;top:68px;width:131px;height:17px;background:#90ee90"></div>
<div class="cell" style="left:1196px;top:69px;width:130px;height:16px;text-align:right;padding-right:1px;line-height:16px;color:#2a2a2a">82<span style="visibility:hidden"> 880,00</span></div>
<div class="cell" style="left:106px;top:69px;width:118px;height:16px;padding-left:3px;line-height:16px;color:#2a2a2a">2.1.03</div>
<div class="cell" style="left:225px;top:69px;width:183px;height:16px;padding-left:3px;line-height:16px;color:#2a2a2a">Заработная плата</div>
<div class="abs" style="left:105px;top:85px;width:119px;height:17px;background:#fdf7d2"></div>
<div class="abs" style="left:224px;top:85px;width:184px;height:17px;background:#fdf7d2"></div>
<div class="abs" style="left:408px;top:85px;width:131px;height:17px;background:#90ee90"></div>
<div class="cell" style="left:409px;top:86px;width:130px;height:16px;text-align:right;padding-right:2px;line-height:16px;color:#2a2a2a">93 758,00</div>
<div class="abs" style="left:539px;top:85px;width:131px;height:17px;background:#90ee90"></div>
<div class="cell" style="left:540px;top:86px;width:130px;height:16px;text-align:right;padding-right:2px;line-height:16px;color:#2a2a2a">93 758,00</div>
<div class="abs" style="left:670px;top:85px;width:132px;height:17px;background:#90ee90"></div>
<div class="cell" style="left:671px;top:86px;width:131px;height:16px;text-align:right;padding-right:2px;line-height:16px;color:#2a2a2a">93 758,00</div>
<div class="abs" style="left:802px;top:85px;width:131px;height:17px;background:#fdf7d2"></div>
<div class="cell" style="left:803px;top:86px;width:130px;height:16px;text-align:right;padding-right:2px;line-height:16px;color:#2a2a2a">281 274,00</div>
<div class="abs" style="left:933px;top:85px;width:131px;height:17px;background:#90ee90"></div>
<div class="cell" style="left:934px;top:86px;width:130px;height:16px;text-align:right;padding-right:2px;line-height:16px;color:#2a2a2a">93 758,00</div>
<div class="abs" style="left:1064px;top:85px;width:131px;height:17px;background:#90ee90"></div>
<div class="cell" style="left:1065px;top:86px;width:130px;height:16px;text-align:right;padding-right:2px;line-height:16px;color:#2a2a2a">93 758,00</div>
<div class="abs" style="left:1195px;top:85px;width:131px;height:17px;background:#90ee90"></div>
<div class="cell" style="left:1196px;top:86px;width:130px;height:16px;text-align:right;padding-right:1px;line-height:16px;color:#2a2a2a">93<span style="visibility:hidden"> 758,00</span></div>
<div class="cell" style="left:106px;top:86px;width:118px;height:16px;padding-left:3px;line-height:16px;color:#2a2a2a">2.1.04</div>
<div class="cell" style="left:225px;top:86px;width:183px;height:16px;padding-left:3px;line-height:16px;color:#2a2a2a">Электроэнергия</div>
<div class="abs" style="left:105px;top:102px;width:119px;height:17px;background:#fdf7d2"></div>
<div class="abs" style="left:224px;top:102px;width:184px;height:17px;background:#fdf7d2"></div>
<div class="abs" style="left:408px;top:102px;width:131px;height:17px;background:#90ee90"></div>
<div class="cell" style="left:409px;top:103px;width:130px;height:16px;text-align:right;padding-right:2px;line-height:16px;color:#2a2a2a">93 758,00</div>
<div class="abs" style="left:539px;top:102px;width:131px;height:17px;background:#90ee90"></div>
<div class="cell" style="left:540px;top:103px;width:130px;height:16px;text-align:right;padding-right:2px;line-height:16px;color:#2a2a2a">93 758,00</div>
<div class="abs" style="left:670px;top:102px;width:132px;height:17px;background:#90ee90"></div>
<div class="cell" style="left:671px;top:103px;width:131px;height:16px;text-align:right;padding-right:2px;line-height:16px;color:#2a2a2a">93 758,00</div>
<div class="abs" style="left:802px;top:102px;width:131px;height:17px;background:#fdf7d2"></div>
<div class="cell" style="left:803px;top:103px;width:130px;height:16px;text-align:right;padding-right:2px;line-height:16px;color:#2a2a2a">281 274,00</div>
<div class="abs" style="left:933px;top:102px;width:131px;height:17px;background:#90ee90"></div>
<div class="cell" style="left:934px;top:103px;width:130px;height:16px;text-align:right;padding-right:2px;line-height:16px;color:#2a2a2a">93 758,00</div>
<div class="abs" style="left:1064px;top:102px;width:131px;height:17px;background:#90ee90"></div>
<div class="cell" style="left:1065px;top:103px;width:130px;height:16px;text-align:right;padding-right:2px;line-height:16px;color:#2a2a2a">93 758,00</div>
<div class="abs" style="left:1195px;top:102px;width:131px;height:17px;background:#90ee90"></div>
<div class="cell" style="left:1196px;top:103px;width:130px;height:16px;text-align:right;padding-right:1px;line-height:16px;color:#2a2a2a">93<span style="visibility:hidden"> 758,00</span></div>
<div class="cell" style="left:106px;top:103px;width:118px;height:16px;padding-left:3px;line-height:16px;color:#2a2a2a">2.1.05</div>
<div class="cell" style="left:225px;top:103px;width:183px;height:16px;padding-left:3px;line-height:16px;color:#2a2a2a">Ремонты</div>
<div class="abs" style="left:105px;top:119px;width:119px;height:17px;background:#fdf7d2"></div>
<div class="abs" style="left:224px;top:119px;width:184px;height:17px;background:#fdf7d2"></div>
<div class="abs" style="left:408px;top:119px;width:131px;height:17px;background:#90ee90"></div>
<div class="cell" style="left:409px;top:120px;width:130px;height:16px;text-align:right;padding-right:2px;line-height:16px;color:#2a2a2a">93 758,00</div>
<div class="abs" style="left:539px;top:119px;width:131px;height:17px;background:#90ee90"></div>
<div class="cell" style="left:540px;top:120px;width:130px;height:16px;text-align:right;padding-right:2px;line-height:16px;color:#2a2a2a">93 758,00</div>
<div class="abs" style="left:670px;top:119px;width:132px;height:17px;background:#90ee90"></div>
<div class="cell" style="left:671px;top:120px;width:131px;height:16px;text-align:right;padding-right:2px;line-height:16px;color:#2a2a2a">93 758,00</div>
<div class="abs" style="left:802px;top:119px;width:131px;height:17px;background:#fdf7d2"></div>
<div class="cell" style="left:803px;top:120px;width:130px;height:16px;text-align:right;padding-right:2px;line-height:16px;color:#2a2a2a">281 274,00</div>
<div class="abs" style="left:933px;top:119px;width:131px;height:17px;background:#90ee90"></div>
<div class="cell" style="left:934px;top:120px;width:130px;height:16px;text-align:right;padding-right:2px;line-height:16px;color:#2a2a2a">93 758,00</div>
<div class="abs" style="left:1064px;top:119px;width:131px;height:17px;background:#90ee90"></div>
<div class="cell" style="left:1065px;top:120px;width:130px;height:16px;text-align:right;padding-right:2px;line-height:16px;color:#2a2a2a">93 758,00</div>
<div class="abs" style="left:1195px;top:119px;width:131px;height:17px;background:#90ee90"></div>
<div class="cell" style="left:1196px;top:120px;width:130px;height:16px;text-align:right;padding-right:1px;line-height:16px;color:#2a2a2a">93<span style="visibility:hidden"> 758,00</span></div>
<div class="cell" style="left:106px;top:120px;width:118px;height:16px;padding-left:3px;line-height:16px;color:#2a2a2a">2.1.06</div>
<div class="cell" style="left:225px;top:120px;width:183px;height:16px;padding-left:3px;line-height:16px;color:#2a2a2a">Аренда основных средств</div>
<div class="abs" style="left:105px;top:136px;width:119px;height:33px;background:#fdf7d2"></div>
<div class="abs" style="left:224px;top:136px;width:184px;height:33px;background:#fdf7d2"></div>
<div class="abs" style="left:408px;top:136px;width:131px;height:33px;background:#90ee90"></div>
<div class="cell" style="left:409px;top:137px;width:130px;height:32px;text-align:right;padding-right:2px;line-height:32px;color:#2a2a2a">93 758,00</div>
<div class="abs" style="left:539px;top:136px;width:131px;height:33px;background:#90ee90"></div>
<div class="cell" style="left:540px;top:137px;width:130px;height:32px;text-align:right;padding-right:2px;line-height:32px;color:#2a2a2a">93 758,00</div>
<div class="abs" style="left:670px;top:136px;width:132px;height:33px;background:#90ee90"></div>
<div class="cell" style="left:671px;top:137px;width:131px;height:32px;text-align:right;padding-right:2px;line-height:32px;color:#2a2a2a">93 758,00</div>
<div class="abs" style="left:802px;top:136px;width:131px;height:33px;background:#fdf7d2"></div>
<div class="cell" style="left:803px;top:137px;width:130px;height:32px;text-align:right;padding-right:2px;line-height:32px;color:#2a2a2a">281 274,00</div>
<div class="abs" style="left:933px;top:136px;width:131px;height:33px;background:#90ee90"></div>
<div class="cell" style="left:934px;top:137px;width:130px;height:32px;text-align:right;padding-right:2px;line-height:32px;color:#2a2a2a">93 758,00</div>
<div class="abs" style="left:1064px;top:136px;width:131px;height:33px;background:#90ee90"></div>
<div class="cell" style="left:1065px;top:137px;width:130px;height:32px;text-align:right;padding-right:2px;line-height:32px;color:#2a2a2a">93 758,00</div>
<div class="abs" style="left:1195px;top:136px;width:131px;height:33px;background:#90ee90"></div>
<div class="cell" style="left:1196px;top:137px;width:130px;height:32px;text-align:right;padding-right:1px;line-height:32px;color:#2a2a2a">93<span style="visibility:hidden"> 758,00</span></div>
<div class="cell" style="left:106px;top:137px;width:118px;height:32px;padding-left:3px;line-height:32px;color:#2a2a2a">2.1.07</div>
<div class="cell" style="left:225px;top:137px;width:183px;height:32px;padding-left:3px;line-height:16px;white-space:normal;color:#2a2a2a">Затраты по лизингу<br>производственных ОС</div>
<div class="abs" style="left:105px;top:169px;width:119px;height:49px;background:#fdf7d2"></div>
<div class="abs" style="left:224px;top:169px;width:184px;height:49px;background:#fdf7d2"></div>
<div class="abs" style="left:408px;top:169px;width:131px;height:49px;background:#90ee90"></div>
<div class="cell" style="left:409px;top:170px;width:130px;height:48px;text-align:right;padding-right:2px;line-height:48px;color:#2a2a2a">93 758,00</div>
<div class="abs" style="left:539px;top:169px;width:131px;height:49px;background:#90ee90"></div>
<div class="cell" style="left:540px;top:170px;width:130px;height:48px;text-align:right;padding-right:2px;line-height:48px;color:#2a2a2a">93 758,00</div>
<div class="abs" style="left:670px;top:169px;width:132px;height:49px;background:#90ee90"></div>
<div class="cell" style="left:671px;top:170px;width:131px;height:48px;text-align:right;padding-right:2px;line-height:48px;color:#2a2a2a">93 758,00</div>
<div class="abs" style="left:802px;top:169px;width:131px;height:49px;background:#fdf7d2"></div>
<div class="cell" style="left:803px;top:170px;width:130px;height:48px;text-align:right;padding-right:2px;line-height:48px;color:#2a2a2a">281 274,00</div>
<div class="abs" style="left:933px;top:169px;width:131px;height:49px;background:#90ee90"></div>
<div class="cell" style="left:934px;top:170px;width:130px;height:48px;text-align:right;padding-right:2px;line-height:48px;color:#2a2a2a">93 758,00</div>
<div class="abs" style="left:1064px;top:169px;width:131px;height:49px;background:#90ee90"></div>
<div class="cell" style="left:1065px;top:170px;width:130px;height:48px;text-align:right;padding-right:2px;line-height:48px;color:#2a2a2a">93 758,00</div>
<div class="abs" style="left:1195px;top:169px;width:131px;height:49px;background:#90ee90"></div>
<div class="cell" style="left:1196px;top:170px;width:130px;height:48px;text-align:right;padding-right:1px;line-height:48px;color:#2a2a2a">93<span style="visibility:hidden"> 758,00</span></div>
<div class="cell" style="left:106px;top:170px;width:118px;height:48px;padding-left:3px;line-height:48px;color:#2a2a2a">2.1.08</div>
<div class="cell" style="left:225px;top:170px;width:183px;height:48px;padding-left:3px;line-height:16px;white-space:normal;color:#2a2a2a">Амортизация<br>производственного<br>оборудования</div>
<div class="abs" style="left:105px;top:218px;width:119px;height:17px;background:#fdf7d2"></div>
<div class="abs" style="left:224px;top:218px;width:184px;height:17px;background:#fdf7d2"></div>
<div class="abs" style="left:408px;top:218px;width:131px;height:17px;background:#90ee90"></div>
<div class="cell" style="left:409px;top:219px;width:130px;height:16px;text-align:right;padding-right:2px;line-height:16px;color:#2a2a2a">144 676,40</div>
<div class="abs" style="left:539px;top:218px;width:131px;height:17px;background:#90ee90"></div>
<div class="cell" style="left:540px;top:219px;width:130px;height:16px;text-align:right;padding-right:2px;line-height:16px;color:#2a2a2a">151 359,44</div>
<div class="abs" style="left:670px;top:218px;width:132px;height:17px;background:#90ee90"></div>
<div class="cell" style="left:671px;top:219px;width:131px;height:16px;text-align:right;padding-right:2px;line-height:16px;color:#2a2a2a">151 359,44</div>
<div class="abs" style="left:802px;top:218px;width:131px;height:17px;background:#fdf7d2"></div>
<div class="cell" style="left:803px;top:219px;width:130px;height:16px;text-align:right;padding-right:2px;line-height:16px;color:#2a2a2a">447 395,28</div>
<div class="abs" style="left:933px;top:218px;width:131px;height:17px;background:#90ee90"></div>
<div class="cell" style="left:934px;top:219px;width:130px;height:16px;text-align:right;padding-right:2px;line-height:16px;color:#2a2a2a">151 359,44</div>
<div class="abs" style="left:1064px;top:218px;width:131px;height:17px;background:#90ee90"></div>
<div class="cell" style="left:1065px;top:219px;width:130px;height:16px;text-align:right;padding-right:2px;line-height:16px;color:#2a2a2a">151 359,44</div>
<div class="abs" style="left:1195px;top:218px;width:131px;height:17px;background:#90ee90"></div>
<div class="cell" style="left:1196px;top:219px;width:130px;height:16px;text-align:right;padding-right:1px;line-height:16px;color:#2a2a2a">144<span style="visibility:hidden"> 676,40</span></div>
<div class="cell" style="left:106px;top:219px;width:118px;height:16px;padding-left:3px;line-height:16px;color:#2a2a2a">2.1.09</div>
<div class="cell" style="left:225px;top:219px;width:183px;height:16px;padding-left:3px;line-height:16px;color:#2a2a2a">Налоги с ФОТ</div>
<div class="abs" style="left:105px;top:235px;width:119px;height:33px;background:#fdf7d2"></div>
<div class="abs" style="left:224px;top:235px;width:184px;height:33px;background:#fdf7d2"></div>
<div class="abs" style="left:408px;top:235px;width:131px;height:33px;background:#fdf7d2"></div>
<div class="cell" style="left:409px;top:236px;width:130px;height:32px;text-align:right;padding-right:2px;line-height:32px;color:#2a2a2a">1 861 174,00</div>
<div class="abs" style="left:539px;top:235px;width:131px;height:33px;background:#fdf7d2"></div>
<div class="cell" style="left:540px;top:236px;width:130px;height:32px;text-align:right;padding-right:2px;line-height:32px;color:#2a2a2a">2 795 128,00</div>
<div class="abs" style="left:670px;top:235px;width:132px;height:33px;background:#fdf7d2"></div>
<div class="cell" style="left:671px;top:236px;width:131px;height:32px;text-align:right;padding-right:2px;line-height:32px;color:#2a2a2a">2 928 254,00</div>
<div class="abs" style="left:802px;top:235px;width:131px;height:33px;background:#fdf7d2"></div>
<div class="cell" style="left:803px;top:236px;width:130px;height:32px;text-align:right;padding-right:2px;line-height:32px;color:#2a2a2a">7 584 556,00</div>
<div class="abs" style="left:933px;top:235px;width:131px;height:33px;background:#fdf7d2"></div>
<div class="cell" style="left:934px;top:236px;width:130px;height:32px;text-align:right;padding-right:2px;line-height:32px;color:#2a2a2a">3 012 688,00</div>
<div class="abs" style="left:1064px;top:235px;width:131px;height:33px;background:#fdf7d2"></div>
<div class="cell" style="left:1065px;top:236px;width:130px;height:32px;text-align:right;padding-right:2px;line-height:32px;color:#2a2a2a">3 012 688,00</div>
<div class="abs" style="left:1195px;top:235px;width:131px;height:33px;background:#fdf7d2"></div>
<div class="cell" style="left:1196px;top:236px;width:130px;height:32px;text-align:right;padding-right:1px;line-height:32px;color:#2a2a2a">2 332<span style="visibility:hidden"> 688,00</span></div>
<div class="cell" style="left:106px;top:236px;width:118px;height:32px;padding-left:3px;line-height:32px;color:#2a2a2a">2.2</div>
<div class="cell" style="left:225px;top:236px;width:183px;height:32px;padding-left:3px;line-height:16px;white-space:normal;color:#2a2a2a">Административно-управленч<br>еские расходы</div>
<div class="abs" style="left:105px;top:268px;width:119px;height:17px;background:#fdf7d2"></div>
<div class="abs" style="left:224px;top:268px;width:184px;height:17px;background:#fdf7d2"></div>
<div class="abs" style="left:408px;top:268px;width:131px;height:17px;background:#90ee90"></div>
<div class="abs" style="left:539px;top:268px;width:131px;height:17px;background:#90ee90"></div>
<div class="abs" style="left:670px;top:268px;width:132px;height:17px;background:#90ee90"></div>
<div class="abs" style="left:802px;top:268px;width:131px;height:17px;background:#fdf7d2"></div>
<div class="abs" style="left:933px;top:268px;width:131px;height:17px;background:#90ee90"></div>
<div class="abs" style="left:1064px;top:268px;width:131px;height:17px;background:#90ee90"></div>
<div class="abs" style="left:1195px;top:268px;width:131px;height:17px;background:#90ee90"></div>
<div class="cell" style="left:106px;top:269px;width:118px;height:16px;padding-left:3px;line-height:16px;color:#2a2a2a">2.2.01</div>
<div class="cell" style="left:225px;top:269px;width:183px;height:16px;padding-left:3px;line-height:16px;color:#2a2a2a">Заработная плата АУП</div>
<div class="abs" style="left:105px;top:285px;width:119px;height:17px;background:#fdf7d2"></div>
<div class="abs" style="left:224px;top:285px;width:184px;height:17px;background:#fdf7d2"></div>
<div class="abs" style="left:408px;top:285px;width:131px;height:17px;background:#90ee90"></div>
<div class="abs" style="left:539px;top:285px;width:131px;height:17px;background:#90ee90"></div>
<div class="abs" style="left:670px;top:285px;width:132px;height:17px;background:#90ee90"></div>
<div class="abs" style="left:802px;top:285px;width:131px;height:17px;background:#fdf7d2"></div>
<div class="abs" style="left:933px;top:285px;width:131px;height:17px;background:#90ee90"></div>
<div class="abs" style="left:1064px;top:285px;width:131px;height:17px;background:#90ee90"></div>
<div class="abs" style="left:1195px;top:285px;width:131px;height:17px;background:#90ee90"></div>
<div class="cell" style="left:225px;top:286px;width:183px;height:16px;padding-left:3px;line-height:16px;color:#2a2a2a"></div>
<div class="abs" style="left:63px;top:0px;width:1263px;height:1px;background:#b4b4b4"></div>
<div class="abs" style="left:0px;top:17px;width:1326px;height:1px;background:#a9a9a9"></div>
<div class="abs" style="left:0px;top:34px;width:1326px;height:1px;background:#a9a9a9"></div>
<div class="abs" style="left:63px;top:0px;width:1px;height:302px;background:#a9a9a9"></div>
<div class="abs" style="left:105px;top:0px;width:1px;height:302px;background:#a9a9a9"></div>
<div class="abs" style="left:224px;top:0px;width:1px;height:17px;background:#a9a9a9"></div>
<div class="abs" style="left:408px;top:0px;width:1px;height:17px;background:#a9a9a9"></div>
<div class="abs" style="left:539px;top:0px;width:1px;height:17px;background:#a9a9a9"></div>
<div class="abs" style="left:670px;top:0px;width:1px;height:17px;background:#a9a9a9"></div>
<div class="abs" style="left:802px;top:0px;width:1px;height:17px;background:#a9a9a9"></div>
<div class="abs" style="left:933px;top:0px;width:1px;height:17px;background:#a9a9a9"></div>
<div class="abs" style="left:1064px;top:0px;width:1px;height:17px;background:#a9a9a9"></div>
<div class="abs" style="left:1195px;top:0px;width:1px;height:17px;background:#a9a9a9"></div>
<div class="abs" style="left:1326px;top:0px;width:1px;height:17px;background:#a9a9a9"></div>
<div class="abs" style="left:63px;top:51px;width:42px;height:1px;background:#a9a9a9"></div>
<div class="abs" style="left:63px;top:68px;width:42px;height:1px;background:#a9a9a9"></div>
<div class="abs" style="left:63px;top:85px;width:42px;height:1px;background:#a9a9a9"></div>
<div class="abs" style="left:63px;top:102px;width:42px;height:1px;background:#a9a9a9"></div>
<div class="abs" style="left:63px;top:119px;width:42px;height:1px;background:#a9a9a9"></div>
<div class="abs" style="left:63px;top:136px;width:42px;height:1px;background:#a9a9a9"></div>
<div class="abs" style="left:63px;top:169px;width:42px;height:1px;background:#a9a9a9"></div>
<div class="abs" style="left:63px;top:218px;width:42px;height:1px;background:#a9a9a9"></div>
<div class="abs" style="left:63px;top:235px;width:42px;height:1px;background:#a9a9a9"></div>
<div class="abs" style="left:63px;top:268px;width:42px;height:1px;background:#a9a9a9"></div>
<div class="abs" style="left:63px;top:285px;width:42px;height:1px;background:#a9a9a9"></div>
<div class="abs" style="left:63px;top:302px;width:42px;height:1px;background:#a9a9a9"></div>
<div class="abs" style="left:105px;top:51px;width:1221px;height:1px;background:#333"></div>
<div class="abs" style="left:105px;top:68px;width:1221px;height:1px;background:#333"></div>
<div class="abs" style="left:105px;top:85px;width:1221px;height:1px;background:#333"></div>
<div class="abs" style="left:105px;top:102px;width:1221px;height:1px;background:#333"></div>
<div class="abs" style="left:105px;top:119px;width:1221px;height:1px;background:#333"></div>
<div class="abs" style="left:105px;top:136px;width:1221px;height:1px;background:#333"></div>
<div class="abs" style="left:105px;top:169px;width:1221px;height:1px;background:#333"></div>
<div class="abs" style="left:105px;top:218px;width:1221px;height:1px;background:#333"></div>
<div class="abs" style="left:105px;top:235px;width:1221px;height:1px;background:#333"></div>
<div class="abs" style="left:105px;top:268px;width:1221px;height:1px;background:#333"></div>
<div class="abs" style="left:105px;top:285px;width:1221px;height:1px;background:#333"></div>
<div class="abs" style="left:224px;top:17px;width:1px;height:285px;background:#333"></div>
<div class="abs" style="left:408px;top:17px;width:1px;height:285px;background:#a9a9a9"></div>
<div class="abs" style="left:539px;top:17px;width:1px;height:285px;background:#333"></div>
<div class="abs" style="left:670px;top:17px;width:1px;height:285px;background:#333"></div>
<div class="abs" style="left:802px;top:17px;width:1px;height:285px;background:#333"></div>
<div class="abs" style="left:933px;top:17px;width:1px;height:285px;background:#333"></div>
<div class="abs" style="left:1064px;top:17px;width:1px;height:285px;background:#333"></div>
<div class="abs" style="left:1195px;top:17px;width:1px;height:285px;background:#333"></div>
<div class="abs" style="left:1326px;top:17px;width:1px;height:285px;background:#333"></div>
<div class="abs" style="left:9px;top:34px;width:1px;height:252px;background:#9a9a9a"></div>
<div class="abs" style="left:24px;top:34px;width:1px;height:201px;background:#9a9a9a"></div>
<div class="abs" style="left:24px;top:235px;width:39px;height:1px;background:#9a9a9a"></div>
<div class="abs" style="left:18px;top:246px;width:13px;height:13px;border:1px solid #9a9a9a;border-radius:2px;background:#fff"></div>
<div class="abs" style="left:20px;top:252px;width:9px;height:1px;background:#444"></div>
<div class="abs" style="left:24px;top:259px;width:1px;height:27px;background:#9a9a9a"></div>
</div>
<div class="abs" style="left:1319px;top:297px;width:7px;height:241px;border-radius:4px;background:#d6d6d6"></div>
<div class="abs" style="left:1319px;top:332px;width:7px;height:35px;border-radius:4px;background:#9e9e9e"></div>
<div class="arr" style="left:1319px;top:282px;border-left-width:3.5px;border-right-width:3.5px;border-top:none;border-bottom:5px solid #555"></div>
<div class="arr" style="left:1319px;top:548px;border-left-width:3.5px;border-right-width:3.5px;border-top:5px solid #555"></div>
<div class="abs" style="left:53px;top:564px;width:1239px;height:8px;border-radius:4px;background:#d6d6d6"></div>
<div class="abs" style="left:53px;top:564px;width:486px;height:8px;border-radius:4px;background:#9b9b9b"></div>
<div class="arr" style="left:39px;top:565px;border-top:3px solid transparent;border-bottom:3px solid transparent;border-left:none;border-right:5px solid #bdbdbd"></div>
<div class="arr" style="left:1302px;top:565px;border-top:3px solid transparent;border-bottom:3px solid transparent;border-right:none;border-left:5px solid #555"></div>
<div class="abs" style="left:29px;top:580px;width:1300px;height:1px;background:repeating-linear-gradient(90deg,#c6c6c6 0,#c6c6c6 4px,transparent 4px,transparent 6px)"></div>
<div class="t" style="left:29px;top:586px;font-size:16px;line-height:18px;color:#129a4e">Данные</div>
<div class="btn dis" style="left:29px;top:607px;width:84px">Добавить</div>
<div class="btn" style="left:133px;top:607px;width:60px"></div>
<div class="abs" style="left:162px;top:608px;width:1px;height:24px;background:#d0d0d0"></div>
<svg class="abs" style="left:140px;top:613px" width="14" height="14" viewBox="0 0 14 14">
<path d="M7 0.8 L13 7 H9.4 V13 H4.6 V7 H1Z" fill="#a2acb6"/></svg>
<svg class="abs" style="left:169px;top:613px" width="14" height="14" viewBox="0 0 14 14">
<path d="M7 13.2 L13 7 H9.4 V1 H4.6 V7 H1Z" fill="#a2acb6"/></svg>
<div class="btn" style="left:213px;top:607px;width:30px"></div>
<svg class="abs" style="left:218px;top:611px" width="19" height="18" viewBox="0 0 19 18"><path d="M5.5 4.5 V13.5" stroke="#8e9aa8" stroke-width="1.4"/><path d="M2 13 H9 L5.5 17Z" fill="#8e9aa8"/>
<path d="M4.8 4.5 H14.5" stroke="#8e9aa8" stroke-width="1.4"/><path d="M14 1 V8 L18 4.5Z" fill="#8e9aa8"/>
<path d="M6.5 5.5 L13 12" stroke="#8e9aa8" stroke-width="1"/><path d="M10.5 15.5 H16 V10Z" fill="#8e9aa8"/></svg>
<div class="btn dis" style="left:1269px;top:607px;width:61px;text-align:left;padding-left:13px">Еще</div>
<div class="arr" style="left:1318px;top:620px;border-top-color:#aaa"></div>
<div class="abs" style="left:29px;top:637px;width:1301px;height:64px;border:1px solid #a3a3a3;background:#fff"></div>
<div class="abs" style="left:30px;top:638px;width:1285px;height:48px;overflow:hidden">
<div class="abs" style="left:0px;top:0;width:103px;height:31px;background:#f0f0f0;border-right:1px solid #c8c8c8;border-bottom:1px solid #c8c8c8;box-shadow:inset -1px 0 0 #fafafa"></div>
<div class="cell" style="left:16px;top:6px;width:83px;height:17px;color:#333">N</div>
<div class="abs" style="left:0px;top:32px;width:103px;height:16px;background:#fcec9c;border-right:1px solid #fff"></div>
<div class="cell" style="left:0px;top:37px;width:86px;height:11px;text-align:right;color:#222">282</div>
<div class="abs" style="left:103px;top:0;width:154px;height:31px;background:#f0f0f0;border-right:1px solid #c8c8c8;border-bottom:1px solid #c8c8c8;box-shadow:inset -1px 0 0 #fafafa"></div>
<div class="cell" style="left:119px;top:6px;width:134px;height:17px;color:#333">Контрагент</div>
<div class="abs" style="left:103px;top:32px;width:154px;height:16px;background:#fdf6d0;border-right:1px solid #fff"></div>
<div class="cell" style="left:119px;top:37px;width:134px;height:11px;color:#999">недоступно</div>
<div class="abs" style="left:257px;top:0;width:154px;height:31px;background:#f0f0f0;border-right:1px solid #c8c8c8;border-bottom:1px solid #c8c8c8;box-shadow:inset -1px 0 0 #fafafa"></div>
<div class="cell" style="left:273px;top:6px;width:134px;height:17px;color:#333">Договор контраге...</div>
<div class="abs" style="left:257px;top:32px;width:154px;height:16px;background:#fdf6d0;border-right:1px solid #fff"></div>
<div class="cell" style="left:273px;top:37px;width:134px;height:11px;color:#999">недоступно</div>
<div class="abs" style="left:411px;top:0;width:155px;height:31px;background:#f0f0f0;border-right:1px solid #c8c8c8;border-bottom:1px solid #c8c8c8;box-shadow:inset -1px 0 0 #fafafa"></div>
<div class="cell" style="left:427px;top:6px;width:135px;height:17px;color:#333">Проект</div>
<div class="abs" style="left:411px;top:32px;width:155px;height:16px;background:#fdf6d0;border-right:1px solid #fff"></div>
<div class="cell" style="left:427px;top:37px;width:135px;height:11px;color:#222">Инвест проект</div>
<div class="abs" style="left:566px;top:0;width:154px;height:31px;background:#f0f0f0;border-right:1px solid #c8c8c8;border-bottom:1px solid #c8c8c8;box-shadow:inset -1px 0 0 #fafafa"></div>
<div class="cell" style="left:582px;top:6px;width:134px;height:17px;color:#333">Номенклатурная г...</div>
<div class="abs" style="left:566px;top:32px;width:154px;height:16px;background:#fdf6d0;border-right:1px solid #fff"></div>
<div class="cell" style="left:582px;top:37px;width:134px;height:11px;color:#999">недоступно</div>
<div class="abs" style="left:720px;top:0;width:153px;height:31px;background:#f0f0f0;border-right:1px solid #c8c8c8;border-bottom:1px solid #c8c8c8;box-shadow:inset -1px 0 0 #fafafa"></div>
<div class="cell" style="left:736px;top:6px;width:133px;height:17px;color:#333">Подразделение</div>
<div class="abs" style="left:720px;top:32px;width:153px;height:16px;background:#fdf6d0;border-right:1px solid #fff"></div>
<div class="cell" style="left:736px;top:37px;width:133px;height:11px;color:#999">недоступно</div>
<div class="abs" style="left:873px;top:0;width:154px;height:31px;background:#f0f0f0;border-right:1px solid #c8c8c8;border-bottom:1px solid #c8c8c8;box-shadow:inset -1px 0 0 #fafafa"></div>
<div class="cell" style="left:889px;top:6px;width:134px;height:17px;color:#333">Организация</div>
<div class="abs" style="left:873px;top:32px;width:154px;height:16px;background:#fdf6d0;border-right:1px solid #fff"></div>
<div class="abs" style="left:1027px;top:0;width:164px;height:31px;background:#f0f0f0;border-right:1px solid #c8c8c8;border-bottom:1px solid #c8c8c8;box-shadow:inset -1px 0 0 #fafafa"></div>
<div class="cell" style="left:1043px;top:6px;width:144px;height:17px;color:#333">Количество</div>
<div class="abs" style="left:1027px;top:32px;width:164px;height:16px;background:#fdf6d0;border-right:1px solid #fff"></div>
<div class="cell" style="left:1027px;top:37px;width:147px;height:11px;text-align:right;color:#999">недоступно</div>
<div class="abs" style="left:1191px;top:0;width:174px;height:31px;background:#f0f0f0;border-right:1px solid #c8c8c8;border-bottom:1px solid #c8c8c8;box-shadow:inset -1px 0 0 #fafafa"></div>
<div class="cell" style="left:1207px;top:6px;width:154px;height:17px;color:#333">Цена (норма)</div>
<div class="abs" style="left:1191px;top:32px;width:174px;height:16px;background:#fdf6d0;border-right:1px solid #fff"></div>
<div class="cell" style="left:1191px;top:37px;width:157px;height:11px;text-align:right;color:#999">н<span style="visibility:hidden">едоступно</span></div>
</div>
<div class="abs" style="left:53px;top:689px;width:1239px;height:8px;border-radius:4px;background:#d6d6d6"></div>
<div class="abs" style="left:53px;top:689px;width:943px;height:8px;border-radius:4px;background:#9b9b9b"></div>
<div class="arr" style="left:39px;top:690px;border-top:3px solid transparent;border-bottom:3px solid transparent;border-left:none;border-right:5px solid #bdbdbd"></div>
<div class="arr" style="left:1302px;top:690px;border-top:3px solid transparent;border-bottom:3px solid transparent;border-right:none;border-left:5px solid #555"></div>
<div class="arr" style="left:1319px;top:647px;border-left-width:3.5px;border-right-width:3.5px;border-top:none;border-bottom:5px solid #c4c4c4"></div>
<div class="arr" style="left:1319px;top:674px;border-left-width:3.5px;border-right-width:3.5px;border-top:5px solid #555"></div>
<!--BODY-->
</body></html>
